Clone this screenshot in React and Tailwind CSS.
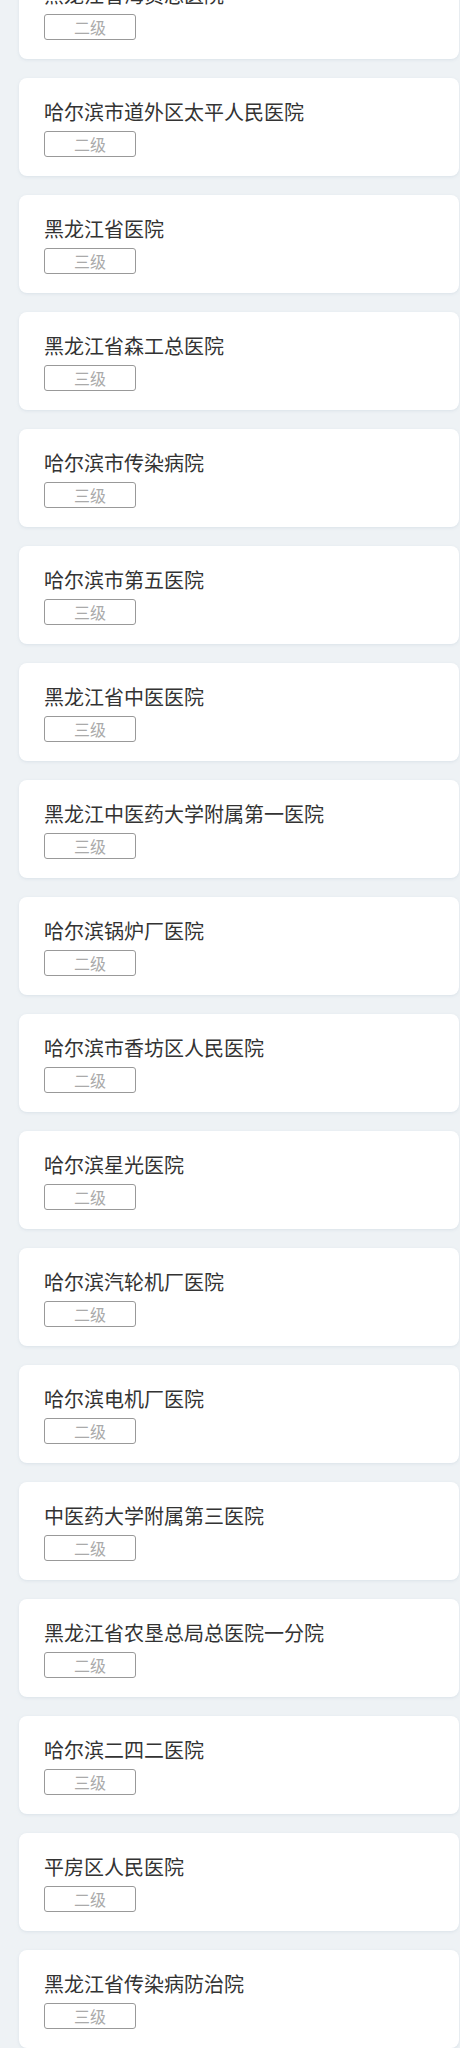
import React from 'react';

const hospitals = [
    { name: '黑龙江省海员总医院', level: '二级' },
    { name: '哈尔滨市道外区太平人民医院', level: '二级' },
    { name: '黑龙江省医院', level: '三级' },
    { name: '黑龙江省森工总医院', level: '三级' },
    { name: '哈尔滨市传染病院', level: '三级' },
    { name: '哈尔滨市第五医院', level: '三级' },
    { name: '黑龙江省中医医院', level: '三级' },
    { name: '黑龙江中医药大学附属第一医院', level: '三级' },
    { name: '哈尔滨锅炉厂医院', level: '二级' },
    { name: '哈尔滨市香坊区人民医院', level: '二级' },
    { name: '哈尔滨星光医院', level: '二级' },
    { name: '哈尔滨汽轮机厂医院', level: '二级' },
    { name: '哈尔滨电机厂医院', level: '二级' },
    { name: '中医药大学附属第三医院', level: '二级' },
    { name: '黑龙江省农垦总局总医院一分院', level: '二级' },
    { name: '哈尔滨二四二医院', level: '三级' },
    { name: '平房区人民医院', level: '二级' },
    { name: '黑龙江省传染病防治院', level: '三级' },
];

const HospitalCard = ({ hospital }) => (
    <div className="h-[98px] w-[440px] shrink-0 rounded-[8px] bg-white pt-[20px] pl-[25px] shadow-[0_1px_3px_rgba(180,195,210,0.35)]">
        <div className="text-[20px] leading-[28px] text-[#333]">{hospital.name}</div>
        <div className="mt-[5px] flex h-[26px] w-[92px] items-center justify-center rounded-[3px] border border-[#999] text-[16px] text-[#aaa]">
            {hospital.level}
        </div>
    </div>
);

const App = () => {
    return (
        <div
            className="h-[2048px] overflow-hidden bg-[#eef2f5]"
            style={{ fontFamily: '"Noto Sans CJK SC", "Noto Sans", sans-serif' }}
        >
            {/* list is scrolled part way, first card cut off at the top */}
            <div className="-mt-[39px] flex flex-col gap-[19px] pl-[19px]">
                {hospitals.map((h, i) => (
                    <HospitalCard key={i} hospital={h} />
                ))}
            </div>
        </div>
    );
};

export default App;
